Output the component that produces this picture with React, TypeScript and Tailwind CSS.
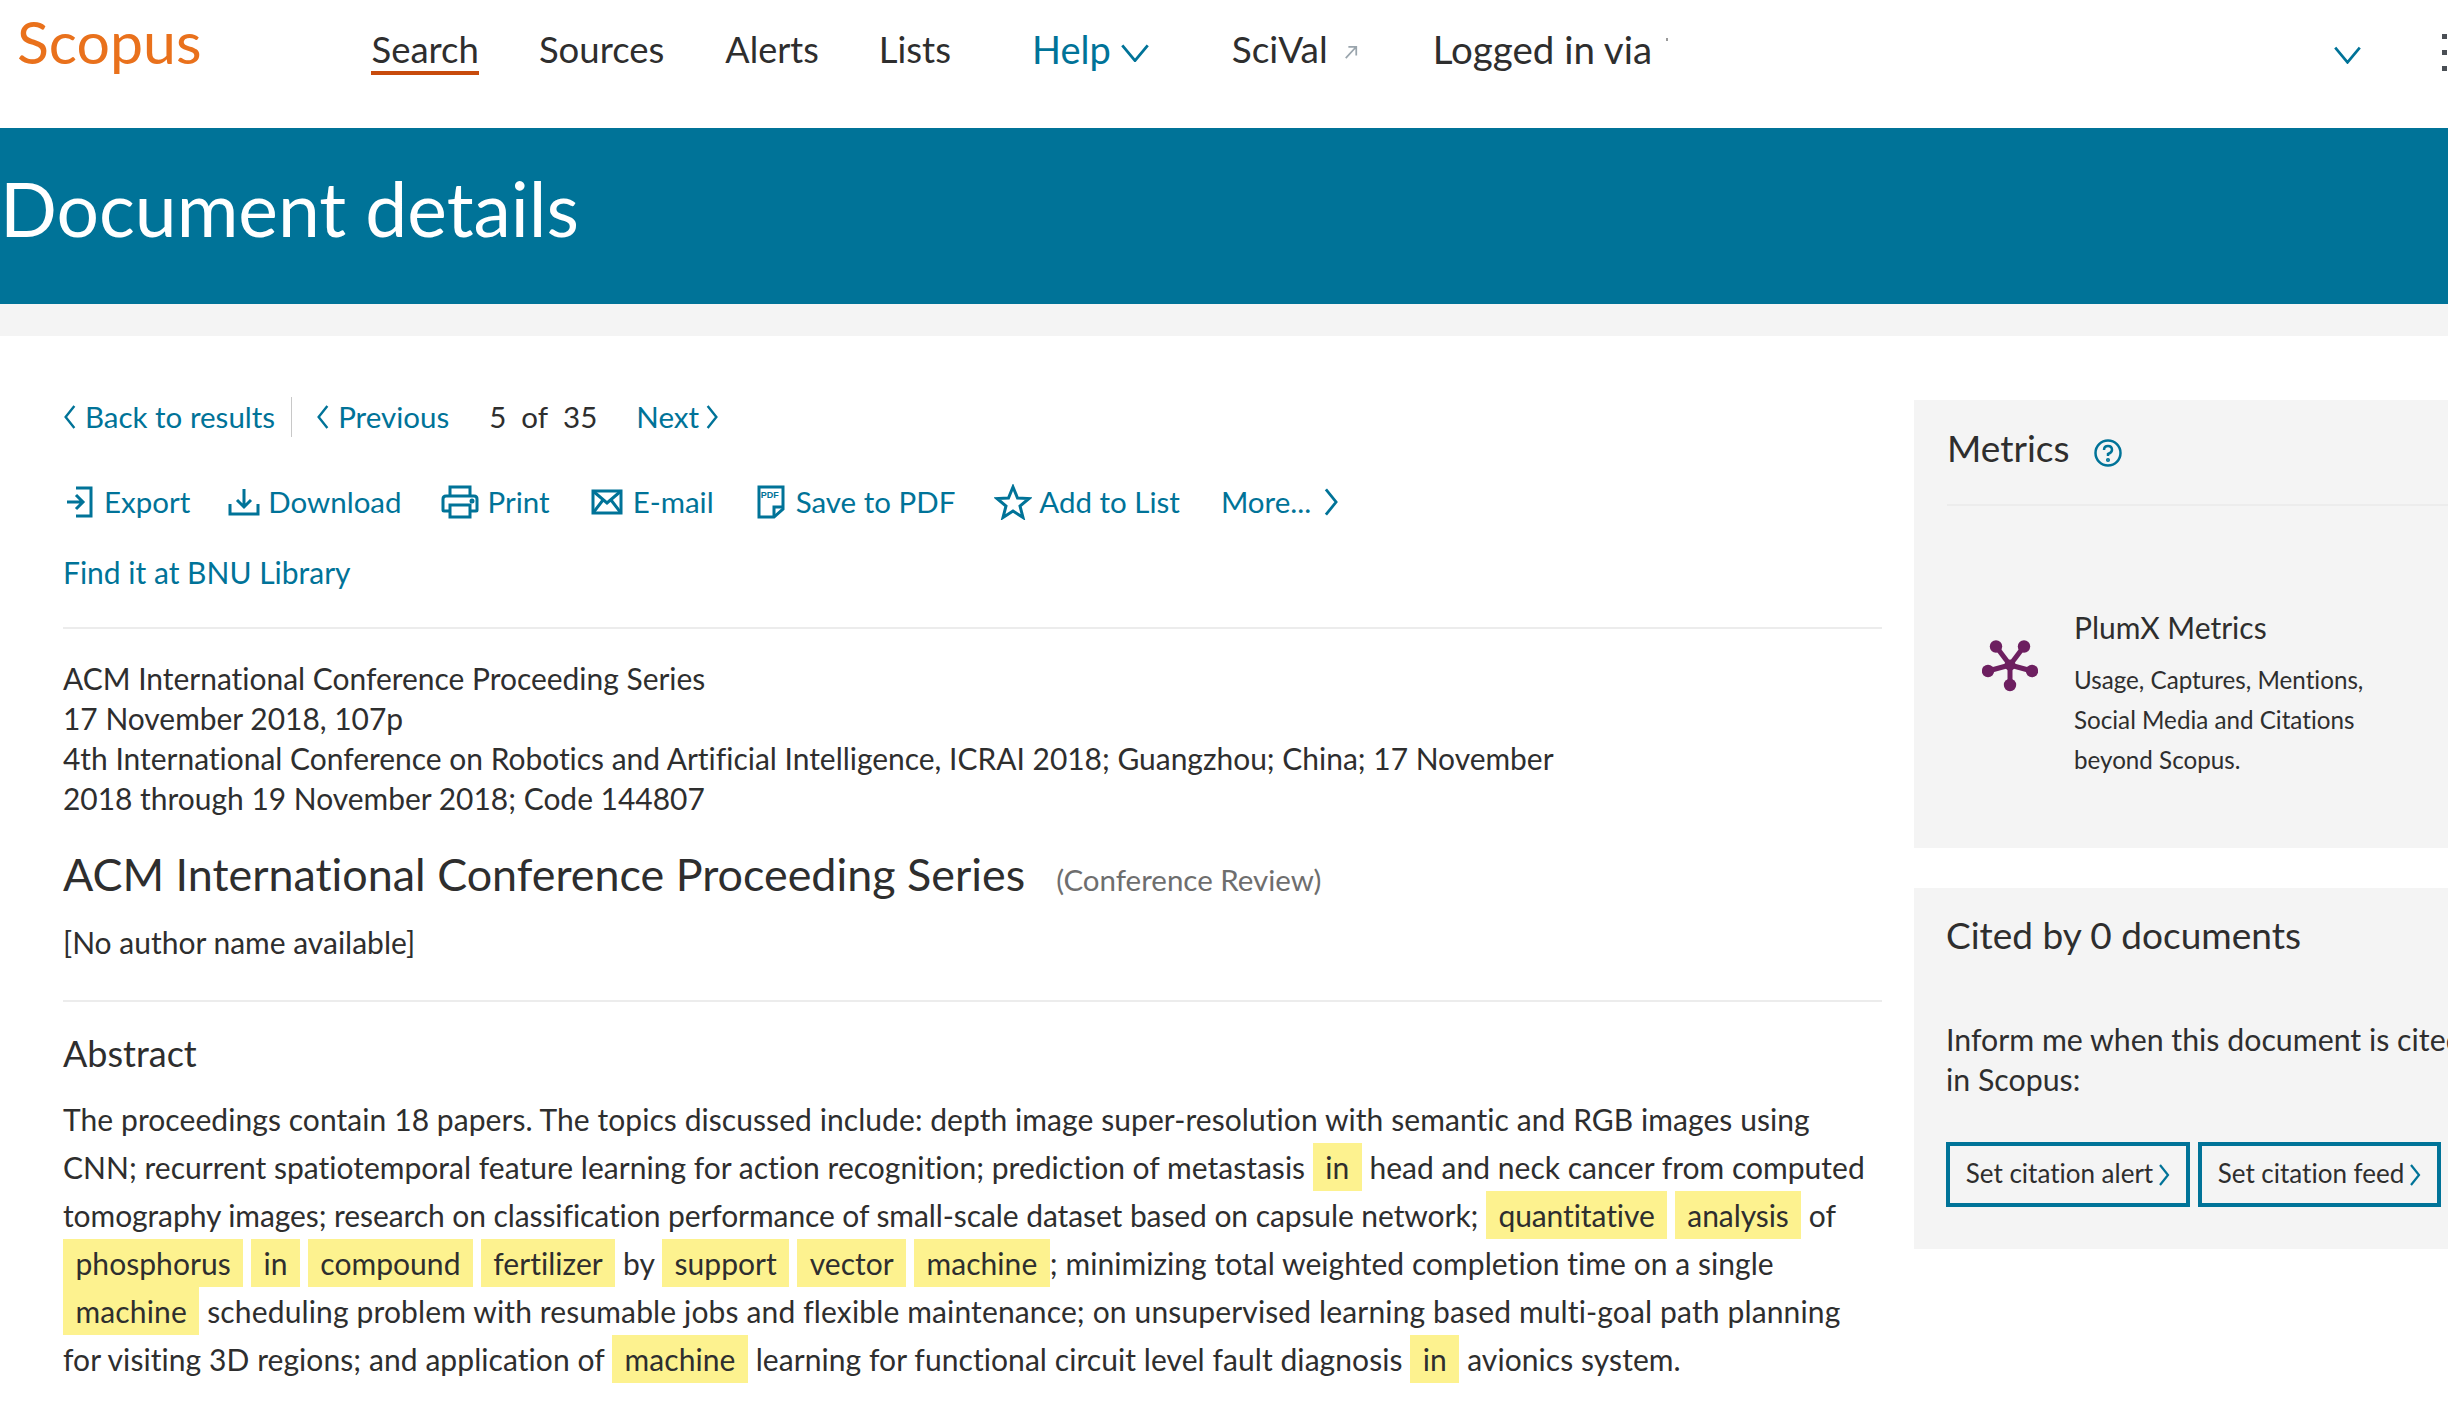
// Scopus document details page: top nav, blue title band, record body, metrics sidebar.
import { ReactNode } from "react";

const FONT = "font-['Lato','Open_Sans',sans-serif] [font-variant-ligatures:none]";

function Chevron({ dir, className = "" }: { dir: "left" | "right" | "down"; className?: string }) {
  const d = dir === "left" ? "M10 1 L2 11 L10 21" : dir === "right" ? "M2 1 L10 11 L2 21" : "M1 1 L11 13 L21 1";
  const box = dir === "down" ? "0 0 22 14" : "0 0 12 22";
  return (
    <svg viewBox={box} fill="none" stroke="currentColor" strokeWidth="2.2" className={`shrink-0 ${className}`}>
      <path d={d} />
    </svg>
  );
}

function Hl({ children }: { children: ReactNode }) {
  return <span className="inline-block h-[48px] bg-[#fdf28f] px-[12.5px]">{children}</span>;
}

function ExportIcon() {
  return (
    <svg viewBox="0 0 28 32" fill="none" stroke="#007398" strokeWidth="3" className="h-[32px] w-[28px]">
      <path d="M10 2 H25 V30 H10" />
      <path d="M1 16 H16 M10 9 L17 16 L10 23" />
    </svg>
  );
}

function DownloadIcon() {
  return (
    <svg viewBox="0 0 32 30" fill="none" stroke="#007398" strokeWidth="3" className="h-[30px] w-[32px]">
      <path d="M2 17 V27 H30 V17" />
      <path d="M16 2 V20 M9 13 L16 20 L23 13" />
    </svg>
  );
}

function PrintIcon() {
  return (
    <svg viewBox="0 0 38 34" fill="none" stroke="#007398" strokeWidth="3" className="h-[34px] w-[38px]">
      <path d="M9 11 V2 H29 V11" />
      <path d="M9 26 H3 Q2 26 2 25 V14 Q2 11 5 11 H33 Q36 11 36 14 V25 Q36 26 35 26 H29" />
      <path d="M9 20 H29 V32 H9 Z" />
      <circle cx="31" cy="16" r="1" fill="#007398" />
    </svg>
  );
}

function MailIcon() {
  return (
    <svg viewBox="0 0 32 26" fill="none" stroke="#007398" strokeWidth="3" className="h-[26px] w-[32px]">
      <rect x="2" y="2" width="28" height="22" />
      <path d="M2 2 L16 14 L30 2 M2 24 L12 11 M30 24 L20 11" />
    </svg>
  );
}

function PdfIcon() {
  return (
    <div className="relative h-[34px] w-[28px]">
      <svg viewBox="0 0 28 34" fill="none" stroke="#007398" strokeWidth="3" className="h-[34px] w-[28px]">
        <path d="M2 2 H26 V24 L17 32 H2 Z" />
        <path d="M17 32 V22 H26" />
      </svg>
      <span className="absolute left-[4px] top-[5px] font-['Liberation_Sans'] text-[9px] font-bold leading-[10px] text-[#007398]">
        PDF
      </span>
    </div>
  );
}

function StarIcon() {
  return (
    <svg viewBox="0 0 38 36" fill="none" stroke="#007398" strokeWidth="3" className="h-[36px] w-[38px]">
      <path d="M19 3 L23.5 14 L35 14.5 L26 22 L29 33.5 L19 27 L9 33.5 L12 22 L3 14.5 L14.5 14 Z" />
    </svg>
  );
}

function PlumIcon() {
  const tips = [
    [-14, -18.5],
    [14, -18.5],
    [22, 6],
    [0, 20],
    [-22, 6],
  ];
  return (
    <svg viewBox="-28 -26 56 53" className="h-[53px] w-[56px]" fill="#6d1f60" stroke="#6d1f60">
      {tips.map(([x, y]) => (
        <g key={`${x}-${y}`}>
          <line x1="0" y1="0" x2={x} y2={y} strokeWidth="5" />
          <circle cx={x} cy={y} r="6.2" stroke="none" />
        </g>
      ))}
      <circle cx="0" cy="0" r="5.5" stroke="none" />
    </svg>
  );
}

function ActionLink({ icon, label, className }: { icon: ReactNode; label: string; className: string }) {
  return (
    <span className={`flex items-center ${className}`}>
      {icon}
      <span>{label}</span>
    </span>
  );
}

function Header() {
  return (
    <header className="flex h-[128px] items-start overflow-hidden whitespace-nowrap bg-white text-[36px] leading-[44px] text-[#2e2e2e]">
      <span className="ml-[17px] mt-[2px] shrink-0 text-[59px] leading-[80px] text-[#e9711c]">Scopus</span>
      <span className="ml-[170px] mt-[27px] shrink-0 border-b-[4px] border-[#c84b0c] text-[36.5px] leading-[44px]">Search</span>
      <span className="ml-[60px] mt-[27px] shrink-0 text-[36.5px]">Sources</span>
      <span className="ml-[61px] mt-[27px] shrink-0">Alerts</span>
      <span className="ml-[60px] mt-[27px] shrink-0 text-[36.5px]">Lists</span>
      <span className="ml-[81px] mt-[27px] flex shrink-0 items-center text-[38px] text-[#007398]">
        Help
        <Chevron dir="down" className="ml-[10px] mt-[8px] h-[18px] w-[28px]" />
      </span>
      <span className="ml-[83px] mt-[27px] shrink-0 text-[37px]">SciVal</span>
      <svg viewBox="0 0 16 16" fill="none" stroke="#9aa5ad" strokeWidth="2" className="ml-[16px] mt-[44px] h-[16px] w-[14px] shrink-0">
        <path d="M2 15 L14 2 M5 2 H14 V12" />
      </svg>
      <span className="ml-[75px] mt-[27px] shrink-0 text-[38.5px]">Logged in via</span>
      <span className="ml-[14px] mt-[38px] h-[3px] w-[2px] shrink-0 bg-[#9a9a9a]" />
      <Chevron dir="down" className="ml-[666px] mt-[46px] h-[18px] w-[27px] text-[#007398]" />
      <div className="ml-[81px] mt-[34px] flex shrink-0 flex-col gap-[11px]">
        <span className="h-[5px] w-[5px] bg-[#4a4f55]" />
        <span className="h-[5px] w-[5px] bg-[#4a4f55]" />
        <span className="h-[5px] w-[5px] bg-[#4a4f55]" />
      </div>
    </header>
  );
}

function RecordBody() {
  return (
    <div className="w-[1819px] shrink-0">
      <div className="mt-[59px] flex h-[44px] items-center text-[29.5px] text-[#007398]">
        <Chevron dir="left" className="mr-[8px] h-[24px] w-[14px]" />
        <span>Back to results</span>
        <span className="ml-[16px] mr-[24px] h-[40px] w-px bg-[#c8c8c8]" />
        <Chevron dir="left" className="mr-[8px] h-[24px] w-[14px]" />
        <span>Previous</span>
        <span className="ml-[40px] text-[#2e2e2e]">5</span>
        <span className="ml-[15px] text-[#2e2e2e]">of</span>
        <span className="ml-[15px] text-[#2e2e2e]">35</span>
        <span className="ml-[39px]">Next</span>
        <Chevron dir="right" className="ml-[6px] h-[24px] w-[14px]" />
      </div>

      <div className="mt-[41px] flex h-[44px] items-center text-[29.5px] text-[#007398]">
        <ActionLink icon={<ExportIcon />} label="Export" className="ml-[3px] gap-[10px]" />
        <ActionLink icon={<DownloadIcon />} label="Download" className="ml-[38px] gap-[8px]" />
        <ActionLink icon={<PrintIcon />} label="Print" className="ml-[39px] gap-[9px]" />
        <ActionLink icon={<MailIcon />} label="E-mail" className="ml-[41px] gap-[10px]" />
        <ActionLink icon={<PdfIcon />} label="Save to PDF" className="ml-[43px] gap-[11px]" />
        <ActionLink icon={<StarIcon />} label="Add to List" className="ml-[39px] gap-[7px]" />
        <span className="ml-[41px]">More...</span>
        <Chevron dir="right" className="ml-[12px] h-[28px] w-[16px]" />
      </div>

      <div className="mt-[26px] h-[44px] text-[30px] leading-[44px] text-[#007398]">Find it at BNU Library</div>

      <div className="mt-[33px] h-[2px] bg-[#ececec]" />

      <p className="mt-[29px] text-[29.95px] leading-[40px] text-[#2e2e2e]">
        ACM International Conference Proceeding Series
        <br />
        17 November 2018, 107p
        <br />
        4th International Conference on Robotics and Artificial Intelligence, ICRAI 2018; Guangzhou; China; 17 November
        <br />
        2018 through 19 November 2018; Code 144807
      </p>

      <div className="mt-[26px] flex items-baseline text-[#2e2e2e]">
        <h2 className="text-[44.85px] leading-[60px] font-normal">ACM International Conference Proceeding Series</h2>
        <span className="ml-[31px] text-[29.5px] text-[#6e6e6e]">(Conference Review)</span>
      </div>

      <p className="mt-[16px] text-[30px] leading-[44px] text-[#2e2e2e]">[No author name available]</p>

      <div className="mt-[36px] h-[2px] bg-[#ececec]" />

      <h3 className="mt-[28px] text-[36px] leading-[46px] text-[#2e2e2e]">Abstract</h3>

      <div className="mt-[19px] whitespace-nowrap text-[30px] leading-[48px] text-[#2e2e2e]">
        <div className="tracking-[0.07px]">
          The proceedings contain 18 papers. The topics discussed include: depth image super-resolution with semantic and RGB images using
        </div>
        <div className="tracking-[0.02px]">
          CNN; recurrent spatiotemporal feature learning for action recognition; prediction of metastasis <Hl>in</Hl> head and neck cancer from computed
        </div>
        <div className="tracking-[-0.08px]">
          tomography images; research on classification performance of small-scale dataset based on capsule network; <Hl>quantitative</Hl> <Hl>analysis</Hl> of
        </div>
        <div className="tracking-[0.05px]">
          <Hl>phosphorus</Hl> <Hl>in</Hl> <Hl>compound</Hl> <Hl>fertilizer</Hl> by <Hl>support</Hl> <Hl>vector</Hl> <Hl>machine</Hl>; minimizing total weighted completion time on a single
        </div>
        <div className="tracking-[0.14px]">
          <Hl>machine</Hl> scheduling problem with resumable jobs and flexible maintenance; on unsupervised learning based multi-goal path planning
        </div>
        <div className="tracking-[0.07px]">
          for visiting 3D regions; and application of <Hl>machine</Hl> learning for functional circuit level fault diagnosis <Hl>in</Hl> avionics system.
        </div>
      </div>
    </div>
  );
}

function Sidebar() {
  return (
    <aside className="ml-[32px] mt-[64px] min-w-0 flex-1 overflow-hidden text-[#2e2e2e]">
      <section className="h-[448px] bg-[#f4f4f4] pl-[33px]">
        <div className="flex h-[106px] items-center border-b-[2px] border-[#ececec]">
          <span className="mb-[8px] text-[37px] leading-[46px]">Metrics</span>
          <svg viewBox="0 0 28 28" fill="none" stroke="#007398" strokeWidth="2.5" className="ml-[24px] mt-[2px] h-[28px] w-[28px]">
            <circle cx="14" cy="14" r="12.5" />
            <path d="M10 11 Q10 7 14 7 Q18 7 18 11 Q18 13.5 14 15 V17" />
            <circle cx="14" cy="21" r="0.8" />
          </svg>
        </div>
        <div className="flex items-start">
          <div className="ml-[35px] mt-[133px]">
            <PlumIcon />
          </div>
          <div className="ml-[36px] mt-[99px]">
            <div className="text-[30px] leading-[44px]">PlumX Metrics</div>
            <p className="mt-[11px] whitespace-nowrap text-[24.2px] leading-[40px]">
              Usage, Captures, Mentions,
              <br />
              Social Media and Citations
              <br />
              beyond Scopus.
            </p>
          </div>
        </div>
      </section>

      <section className="mt-[40px] h-[361px] bg-[#f4f4f4] pl-[32px]">
        <h3 className="pt-[23px] text-[37px] leading-[48px] font-normal">Cited by 0 documents</h3>
        <p className="mt-[60px] whitespace-nowrap text-[30.3px] leading-[40px]">
          Inform me when this document is cited
          <br />
          in Scopus:
        </p>
        <div className="mt-[43px] flex gap-[8px]">
          <button className="flex h-[65px] w-[244px] items-center justify-center border-[4px] border-[#007398] pb-[2px] text-[26px]">
            Set citation alert
            <Chevron dir="right" className="ml-[5px] mt-[2px] h-[22px] w-[12px] text-[#007398]" />
          </button>
          <button className="flex h-[65px] w-[243px] items-center justify-center border-[4px] border-[#007398] pb-[2px] text-[26px]">
            Set citation feed
            <Chevron dir="right" className="ml-[5px] mt-[2px] h-[22px] w-[12px] text-[#007398]" />
          </button>
        </div>
      </section>
    </aside>
  );
}

export default function App() {
  return (
    <div className={`h-screen overflow-hidden bg-white ${FONT}`}>
      <Header />
      <div className="flex h-[176px] items-center bg-[#007398] pb-[17px]">
        <h1 className="text-[75px] leading-[90px] font-normal text-white">Document details</h1>
      </div>
      <div className="h-[32px] bg-[#f4f4f4]" />
      <main className="flex pl-[63px]">
        <RecordBody />
        <Sidebar />
      </main>
    </div>
  );
}
